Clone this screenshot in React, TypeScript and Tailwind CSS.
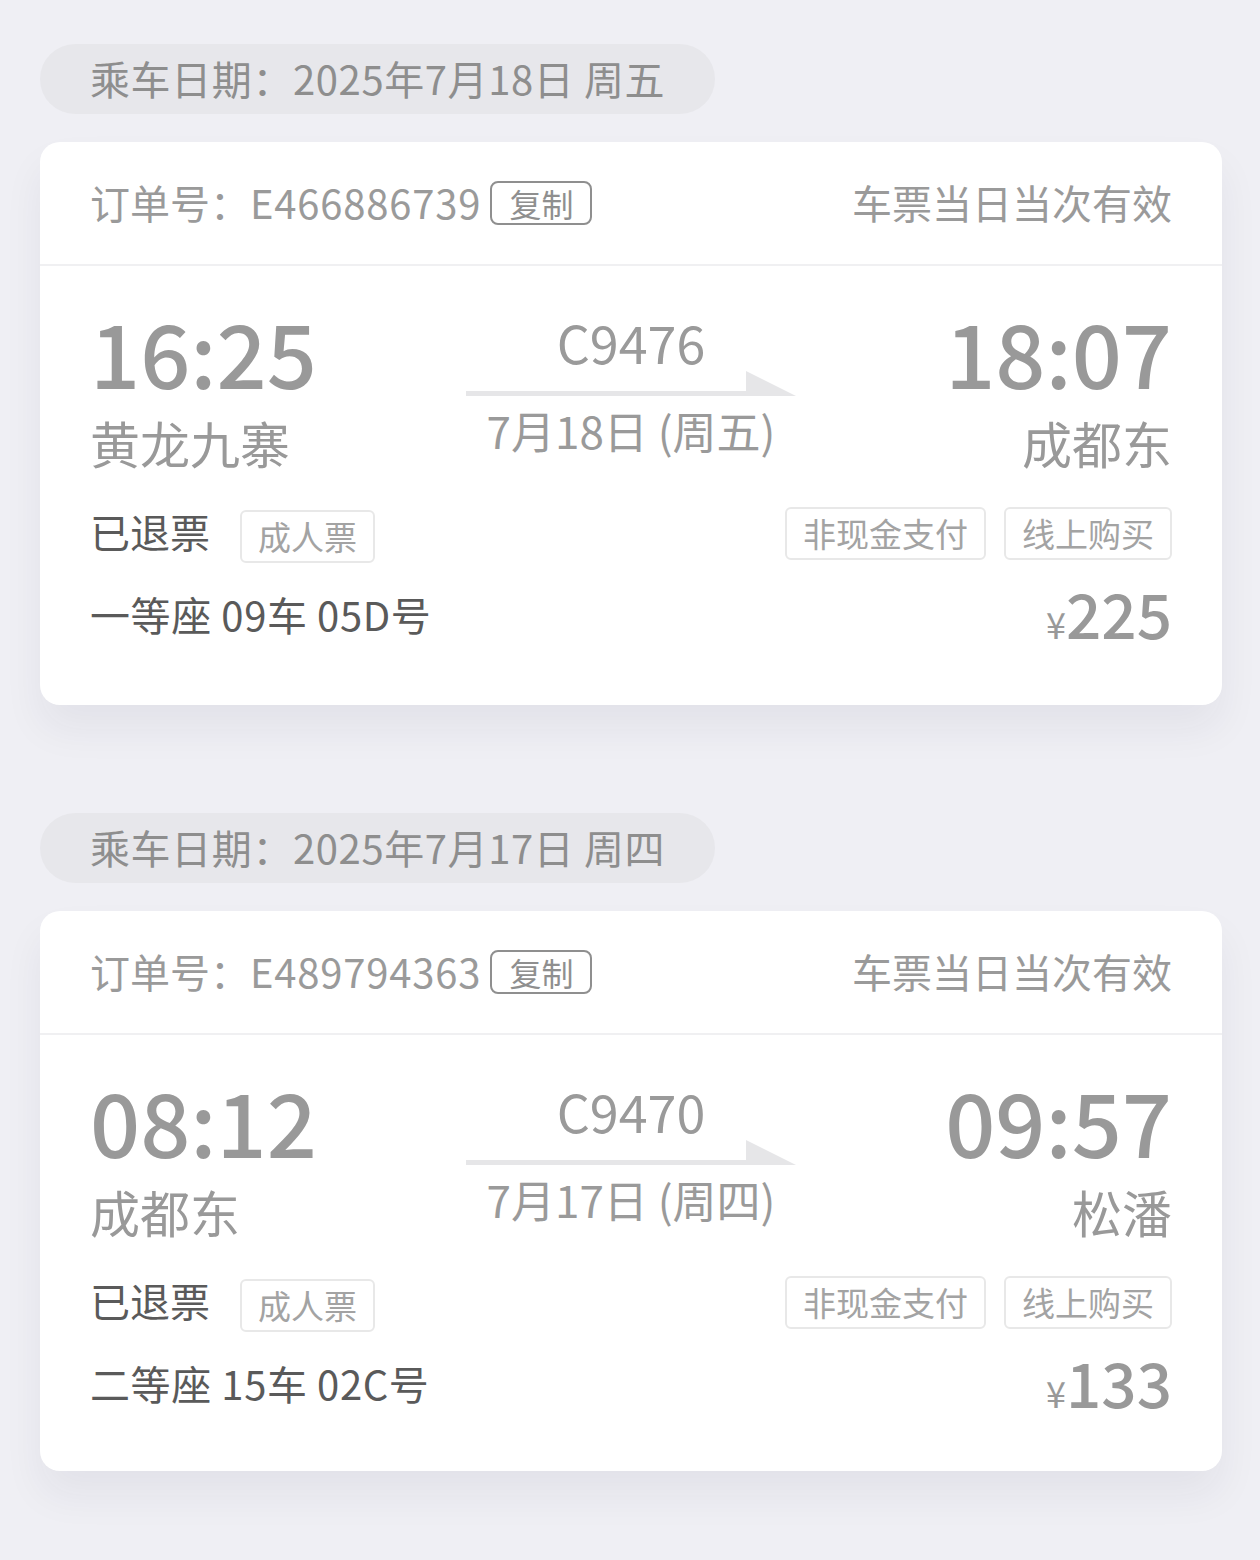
import React from "react";

type Ticket = {
  date: string;
  order: string;
  dep: string;
  depStation: string;
  arr: string;
  arrStation: string;
  train: string;
  trainDate: string;
  seat: string;
  price: string;
};

const tickets: Ticket[] = [
  {
    date: "乘车日期：2025年7月18日 周五",
    order: "E466886739",
    dep: "16:25",
    depStation: "黄龙九寨",
    arr: "18:07",
    arrStation: "成都东",
    train: "C9476",
    trainDate: "7月18日 (周五)",
    seat: "一等座 09车 05D号",
    price: "225",
  },
  {
    date: "乘车日期：2025年7月17日 周四",
    order: "E489794363",
    dep: "08:12",
    depStation: "成都东",
    arr: "09:57",
    arrStation: "松潘",
    train: "C9470",
    trainDate: "7月17日 (周四)",
    seat: "二等座 15车 02C号",
    price: "133",
  },
];

function Arrow() {
  return (
    <svg width="330" height="25" viewBox="0 0 330 25" className="block">
      <path d="M0 20 L280 20 L280 0 L330 25 L0 25 Z" fill="#e6e6e8" />
    </svg>
  );
}

function Tag({ children }: { children: React.ReactNode }) {
  return (
    <div className="h-[53px] px-[16px] flex items-center border-2 border-[#e8e8e8] rounded-[6px] text-[33px] leading-none text-[#a3a3a3]">
      {children}
    </div>
  );
}

function Card({ t, last }: { t: Ticket; last: boolean }) {
  return (
    <div className="w-[1182px] bg-white rounded-[20px] shadow-[0_24px_40px_rgba(40,40,70,0.06)]">
      <div className="h-[122px] px-[50px] flex items-center justify-between text-[40px] leading-none text-[#9a9a9a]">
        <div className="flex items-center">
          <span className="-mt-[2px]">
            订单号：<span className="tracking-[0.8px]">{t.order}</span>
          </span>
          <span className="ml-[9px] h-[44px] px-[17px] flex items-center border-2 border-[#8f8f8f] rounded-[8px] text-[32px] text-[#8f8f8f]">
            复制
          </span>
        </div>
        <span className="-mt-[2px]">车票当日当次有效</span>
      </div>
      <div className="h-[2px] bg-[#f0f0f2]" />
      <div className={"px-[50px] pt-[41px] " + (last ? "pb-[59px]" : "pb-[62px]")}>
        <div className="grid grid-cols-[1fr_330px_1fr]">
          <div className="flex flex-col items-start">
            <div className="text-[88px] leading-none font-medium text-[#999999]">{t.dep}</div>
            <div className="mt-[22px] text-[50px] leading-none text-[#999999]">{t.depStation}</div>
          </div>
          <div className="flex flex-col items-center pt-[9px]">
            <div className="text-[52px] leading-none text-[#9a9a9a]">{t.train}</div>
            <div className="mt-[3px]">
              <Arrow />
            </div>
            <div className="mt-[12px] text-[44px] leading-none text-[#9a9a9a]">{t.trainDate}</div>
          </div>
          <div className="flex flex-col items-end">
            <div className="text-[88px] leading-none font-medium text-[#999999]">{t.arr}</div>
            <div className="mt-[22px] text-[50px] leading-none text-[#999999]">{t.arrStation}</div>
          </div>
        </div>
        <div className="mt-[40px] flex justify-between items-start">
          <div className="mt-[3px] flex items-start">
            <span className="mt-[1px] text-[40px] leading-none text-[#5a5a5a]">已退票</span>
            <div className="ml-[30px]">
              <Tag>成人票</Tag>
            </div>
          </div>
          <div className="flex items-center gap-[18px]">
            <Tag>非现金支付</Tag>
            <Tag>线上购买</Tag>
          </div>
        </div>
        <div className="mt-[18px] flex justify-between items-start">
          <div className="mt-[13px] text-[40px] leading-none tracking-[0.6px] text-[#5a5a5a]">{t.seat}</div>
          <div className="flex items-baseline text-[#999999]">
            <span className="text-[36px] leading-none">¥</span>
            <span className="text-[62px] leading-none font-medium">{t.price}</span>
          </div>
        </div>
      </div>
    </div>
  );
}

export default function App() {
  return (
    <div
      className="min-h-[1560px] bg-[#efeff4] pl-[40px] pt-[44px]"
      style={{ fontFamily: '"Noto Sans CJK SC", "Noto Sans", sans-serif' }}
    >
      {tickets.map((t, i) => (
        <div key={t.order} className={i > 0 ? "mt-[108px]" : ""}>
          <div className="inline-flex h-[70px] px-[50px] items-center rounded-full bg-[#e7e7eb] text-[40px] leading-none tracking-[0.6px] text-[#8e8e8e]">
            <span className="-mt-[3px]">{t.date}</span>
          </div>
          <div className="mt-[28px]">
            <Card t={t} last={i === tickets.length - 1} />
          </div>
        </div>
      ))}
    </div>
  );
}
